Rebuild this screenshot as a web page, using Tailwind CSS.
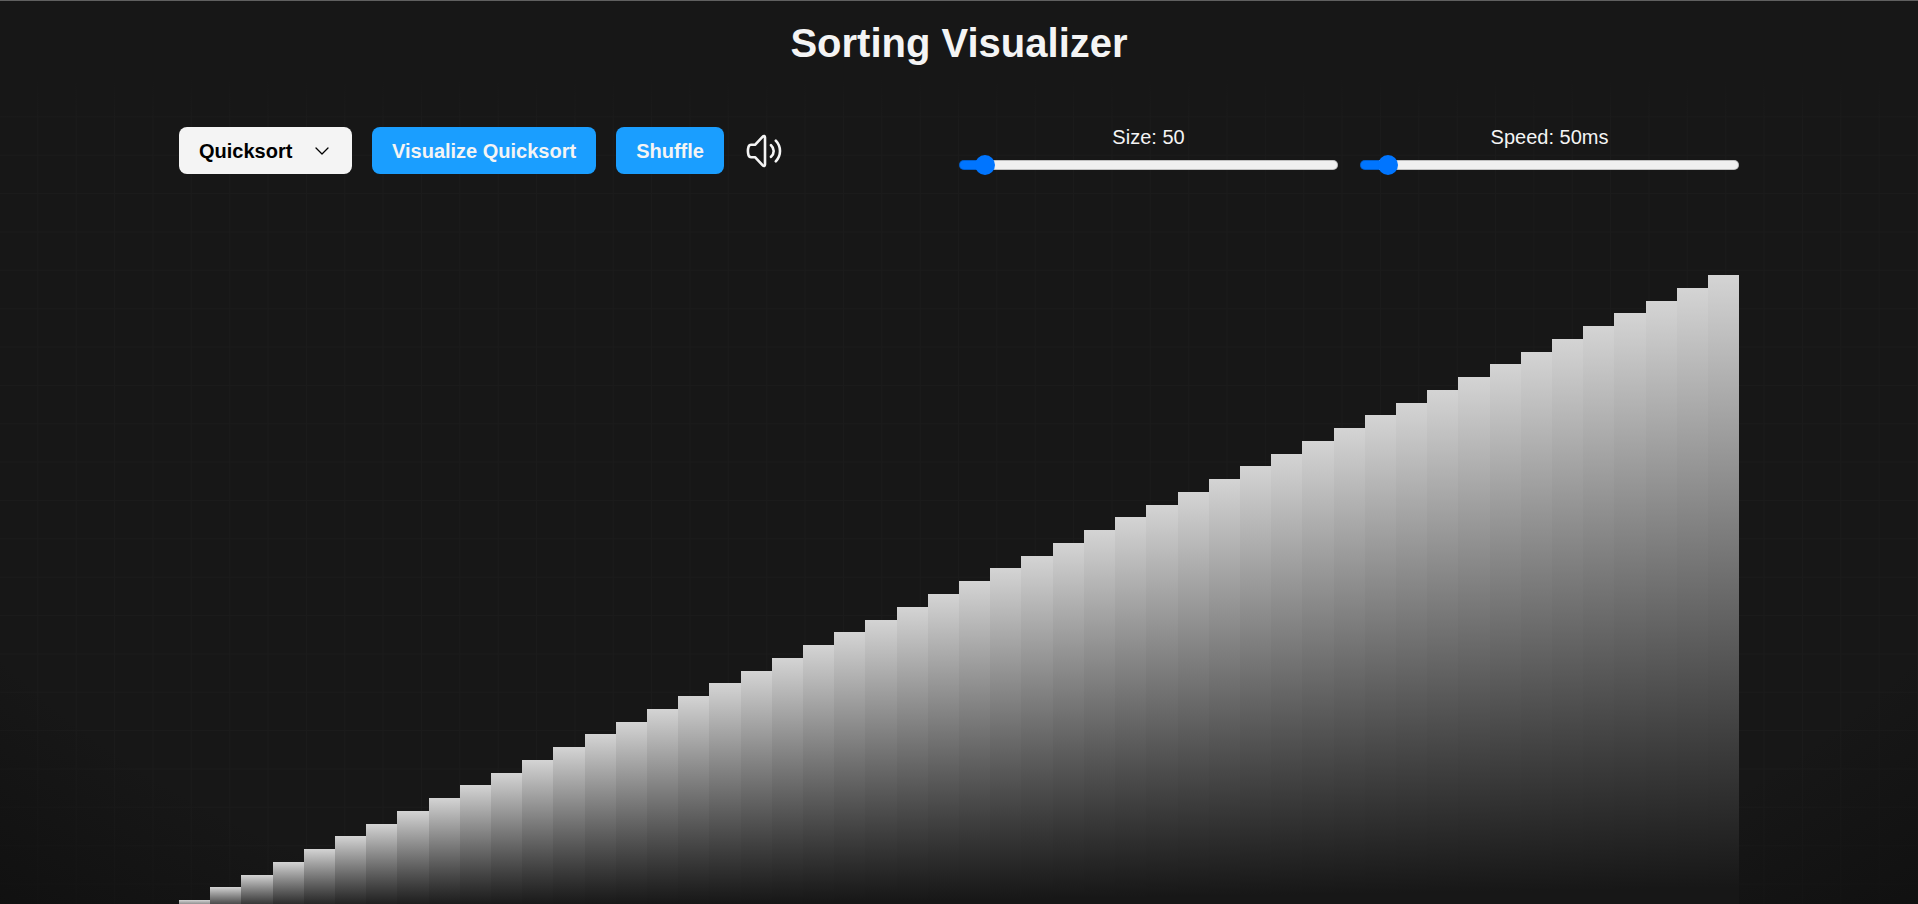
<!DOCTYPE html>
<html lang="en">
<head>
<meta charset="utf-8">
<title>Sorting Visualizer</title>
<script src="https://cdn.jsdelivr.net/npm/@tailwindcss/browser@4"></script>
</head>
<body class="flex h-screen flex-col overflow-hidden border-t border-[#606060] bg-[#171717] font-['Liberation_Sans',Arial,sans-serif] text-xl text-[#f4f4f4]">
<header class="flex h-[78px] shrink-0 items-center justify-center pt-1.5">
  <h1 class="text-[40px] leading-12 font-bold">Sorting Visualizer</h1>
</header>
<main class="relative flex grow flex-col items-center overflow-hidden">
  <div class="absolute inset-0 bg-[linear-gradient(to_left,#1b1b1b_1px,transparent_1px),linear-gradient(to_top,#1b1b1b_1px,transparent_1px)] bg-size-[2vw_2vw]"></div>
  <div class="absolute inset-0 bg-[linear-gradient(to_bottom,#171717,transparent_5%),radial-gradient(ellipse_at_50%_35%,transparent_80%,#0f0f0f_105%)]"></div>
  <div class="relative flex w-full max-w-[1560px] grow flex-col">
    <section class="flex items-center pt-[46px]" aria-label="Controls">
      <div class="flex w-1/2 items-center gap-5">
        <div class="relative">
          <select aria-label="Algorithm" class="block h-[47px] w-[173px] appearance-none rounded-lg bg-[#f4f4f4] pl-5 font-bold text-black">
            <option>Quicksort</option>
          </select>
          <svg class="pointer-events-none absolute top-4 right-[22px] size-4" viewBox="0 0 16 16" fill="none" stroke="#000" stroke-width="1.3" stroke-linecap="round" stroke-linejoin="round"><path d="M2 5l6 6 6-6"/></svg>
        </div>
        <button class="h-[47px] rounded-lg bg-[#1a9eff] px-5 font-bold">Visualize Quicksort</button>
        <button class="h-[47px] rounded-lg bg-[#1a9eff] px-5 font-bold">Shuffle</button>
        <button aria-label="Toggle sound">
          <svg class="size-10" viewBox="0 0 40 40" fill="none" stroke="currentColor" stroke-width="2.6" stroke-linecap="round" stroke-linejoin="round"><path d="M11 13.800 18.500 5.800C19.900 4.400 21 5 21 6.500v27c0 1.500-1.100 2.100-2.500.7l-7.500-8H7.200c-1.400 0-2.300-.7-2.700-2.100a15 15 0 0 1 0-8.200c.4-1.400 1.300-2.100 2.700-2.100zM27 14.200c3.600 3.200 3.600 8.400 0 11.600M31.800 9.700c5.600 6 5.600 14.600 0 20.600"/></svg>
        </button>
      </div>
      <div class="flex w-1/2 gap-[22px]">
        <label class="flex flex-1 flex-col pb-px text-center leading-6">Size: 50
          <input type="range" min="5" max="1000" value="50" style="--fill:5%" class="mt-1.5 h-5 w-full appearance-none bg-transparent [&::-webkit-slider-runnable-track]:h-[10px] [&::-webkit-slider-runnable-track]:rounded-full [&::-webkit-slider-runnable-track]:bg-[linear-gradient(to_right,#0075ff_var(--fill),#efefef_var(--fill))] [&::-webkit-slider-runnable-track]:shadow-[inset_0_0_0_1px_#00000033] [&::-webkit-slider-thumb]:-mt-[5px] [&::-webkit-slider-thumb]:size-5 [&::-webkit-slider-thumb]:appearance-none [&::-webkit-slider-thumb]:rounded-full [&::-webkit-slider-thumb]:bg-[#0075ff]">
        </label>
        <label class="flex flex-1 flex-col pb-px text-center leading-6">Speed: 50ms
          <input type="range" min="1" max="1000" value="50" style="--fill:5%" class="mt-1.5 h-5 w-full appearance-none bg-transparent [&::-webkit-slider-runnable-track]:h-[10px] [&::-webkit-slider-runnable-track]:rounded-full [&::-webkit-slider-runnable-track]:bg-[linear-gradient(to_right,#0075ff_var(--fill),#efefef_var(--fill))] [&::-webkit-slider-runnable-track]:shadow-[inset_0_0_0_1px_#00000033] [&::-webkit-slider-thumb]:-mt-[5px] [&::-webkit-slider-thumb]:size-5 [&::-webkit-slider-thumb]:appearance-none [&::-webkit-slider-thumb]:rounded-full [&::-webkit-slider-thumb]:bg-[#0075ff]">
        </label>
      </div>
    </section>
    <section id="bars" class="mt-[99px] flex h-[638px] shrink-0 items-end" aria-label="Bars"></section>
  </div>
</main>
<script>
  const bars = document.getElementById('bars');
  const count = 50;
  for (let i = 1; i <= count; i++) {
    const bar = document.createElement('div');
    bar.className = 'flex-1 bg-linear-to-b from-[#d4d4d4] to-[#171717] to-96%';
    bar.style.height = (i / count) * 100 + '%';
    bars.append(bar);
  }
</script>
</body>
</html>
